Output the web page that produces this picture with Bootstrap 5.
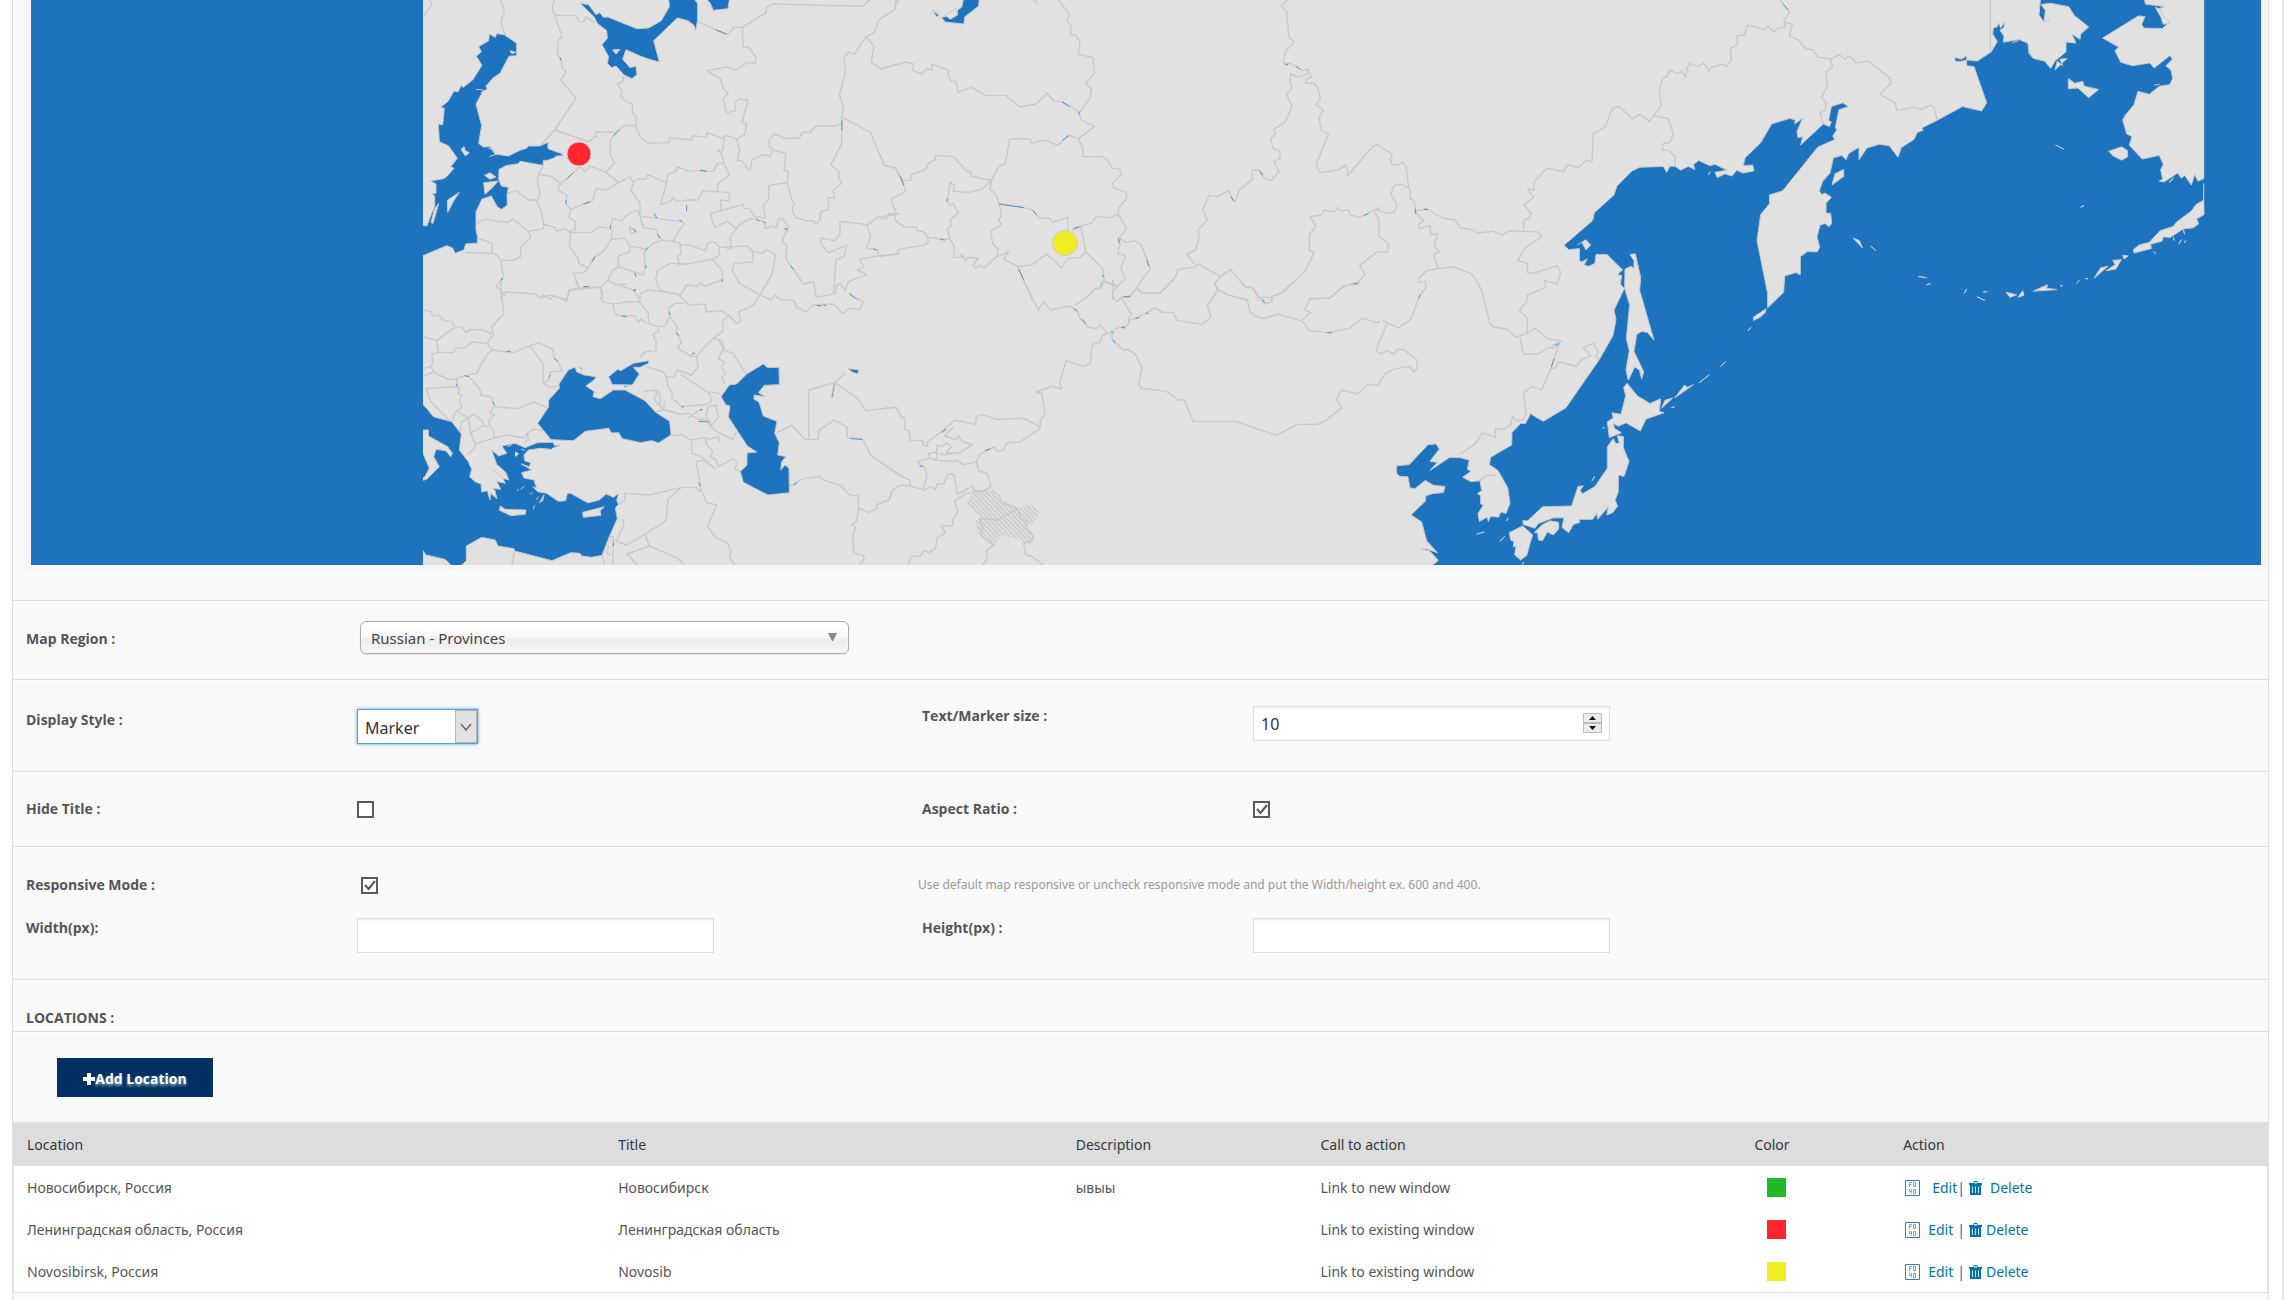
<!DOCTYPE html>
<html lang="en">
<head>
<meta charset="utf-8">
<meta name="viewport" content="width=device-width, initial-scale=1">
<title>Map settings</title>
<link href="https://cdn.jsdelivr.net/npm/bootstrap@5.3.0/dist/css/bootstrap.min.css" rel="stylesheet">
<style>
body{font-family:"Noto Sans","Open Sans",sans-serif;font-size:14px;line-height:20px;color:#555;background:#fff;overflow-x:hidden}
.page-shell{min-height:100vh;padding:0 13px 0 12px;border-right:2px solid #e8e8e8}
.map-panel{min-height:100vh;background:#f9f9f9;border-left:1px solid #dfdfdf;border-right:1px solid #dfdfdf}
.map-frame{background:#f5f5f5;margin:0 2px 30px 13px;padding:0 5px 5px}
.map-frame svg{display:block;width:100%;height:auto}
.form-line{border-top:1px solid #dfdfdf;box-shadow:inset 0 1px #fff;padding-left:13px;display:grid;grid-template-columns:331fr 565fr 331fr 1015fr;align-content:start}
.form-line label,.section-title{font-family:"Open Sans",sans-serif;font-weight:700;font-size:14px;color:#555}
.region-line{padding-top:20px;height:79px}
.style-line{padding-top:26px;height:92px}
.check-line{padding-top:27px;height:75px}
.size-line{padding-top:28px;height:133px;row-gap:23px}
.section-title{border-top:1px solid #dfdfdf;box-shadow:inset 0 1px #fff;padding:28px 13px 3px;height:52px;margin:0;line-height:20px}
.text-box{width:357px;height:35px;border:1px solid #ddd;border-radius:0;background:#fff;box-shadow:inset 0 1px 2px rgba(0,0,0,.07);font-size:16px;color:#333;padding:0 7px;appearance:textfield}
.text-box::-webkit-inner-spin-button{appearance:none}
.pick{position:relative;display:inline-block}
.pick select{appearance:none;width:100%;height:100%}
.pick svg{position:absolute;pointer-events:none}
.pick-region{width:489px;height:33px;margin-left:3px}
.pick-region select{border:1px solid #aaa;border-radius:6px;padding:0 10px;font-size:15px;color:#444;background:linear-gradient(#fff 20%,#f6f6f6 50%,#eee 52%,#f4f4f4 100%);box-shadow:inset 0 0 3px #fff,0 1px 1px rgba(0,0,0,.1)}
.pick-region svg{right:12px;top:12px}
.pick-style{width:121px;height:35px;margin-top:3px}
.pick-style select{border:1px solid #5b9dd9;border-radius:0;padding:2px 7px 0;font-size:16px;color:#333;background:#fff;box-shadow:0 0 3px rgba(30,140,190,.8)}
.pick-style svg{right:1px;top:1px}
.pick-num svg{right:8px;top:7px}
.tick{appearance:none;display:block;width:17px;height:17px;border:2px solid #5a5a5a;background:#fff;margin:2px 0 0}
.tick:checked{background:linear-gradient(#fff,#fff)}
.tick-wrap{position:relative;width:17px}
.tick-wrap svg{position:absolute;left:3px;top:4px;pointer-events:none}
.hint{grid-column:span 2;font-size:12px;color:#999;margin-left:-4px}
.add-btn{background:#003062;color:#fff;border:0;border-radius:0;width:156px;height:39px;font-family:"Open Sans",sans-serif;font-size:14px;font-weight:700;padding:2px 0 0;text-shadow:0 2px 3px rgba(255,255,255,.6)}
.add-btn:hover{background:#003062;color:#fff}
.add-bar{border-top:1px solid #dfdfdf;box-shadow:inset 0 1px #fff;padding:26px 0 25px 44px}
.loc-table{table-layout:fixed;margin:0;border:1px solid #e1e1e1;font-size:14px;background:#fff}
.loc-table th,.loc-table td{background:none;border:0;padding:12px 13px 10px;line-height:20px;font-weight:400;color:#555;box-shadow:none}
.loc-table thead{background:#ddd}
.loc-table th{color:#32373c;padding:12px 13px 11px}
.loc-table a{color:#0073aa;text-decoration:none}
.swatch{display:block;width:19px;height:19px;margin-left:13px}
.acts{color:#0073aa;padding-left:2px}
.acts svg{display:block}
</style>
<script src="https://cdn.jsdelivr.net/npm/bootstrap@5.3.0/dist/js/bootstrap.bundle.min.js"></script>
</head>
<body>
<div class="page-shell">
<main class="map-panel">
<div class="map-frame">
<svg viewBox="31 0 2230 565" role="img" aria-label="Map of Russian provinces">
<defs>
<pattern id="hatch" width="9" height="9" patternUnits="userSpaceOnUse" patternTransform="rotate(-38)"><rect width="4" height="9" fill="#cbcbcb"/></pattern>
<clipPath id="west"><rect x="0" y="-5" width="1225" height="910"/></clipPath>
<style>
.sea{fill:#1e73be;stroke:#c4c8cb;stroke-width:1}
.isle{fill:#e1e1e1;stroke:#c4c8cb;stroke-width:1}
.brd{fill:none;stroke:#c8c9ca;stroke-width:1.4}
.lake{fill:none;stroke:#5a90be;stroke-width:1}
.sea,.isle,.brd,.lake{vector-effect:non-scaling-stroke;stroke-linejoin:round}
</style>
</defs>
<rect x="31" width="2230" height="565" fill="#1e73be"/>
<rect x="423" width="1781" height="565" fill="#e1e1e1"/>
<!-- north-west: Scandinavia, Baltic, European Russia -->
<g transform="translate(400 0) scale(.333333)">
<path class="brd" d="M88-5 95 15 69 50M300-5 313 33 302 70 316 104M466-5 456 22 487 112 476 116 472 162 484 182 486 204 499 216 482 240 528 294 464 390 420 438M464 46H528L537 65 551 66 558 50 585 70M464 390 568 426 582 410 592 412 584 396 648 397 673 376 706 377 710 350 698 340 697 310 680 306 662 288 666 274 652 250 668 246 670 228M648 397 631 420 630 464 644 488 618 517 570 498 553 515 540 500 500 536 482 550 474 570 500 585 498 610 512 628 506 652 526 664 525 692M706 377 722 412 745 429 806 428 809 413 874 420 880 407 918 412 922 398 970 416 974 406 1010 416 1034 404 1040 372 1026 366 1044 302 1018 297 1006 306V332L980 338 970 298 985 278 972 270 962 238 922 212 980 201 1010 210 1042 187 1065 190 1069 172 1044 140 1029 143 1027 82 1098 38 1100 22 1117 12 1388 19 1415-5M893 64 975 102 988 102 1000 82H1027M618 517 657 547 690 530 700 548 692 570 720 610V648L775 656 842 664 854 670 828 704 820 725M657 547 619 570 588 566 578 602 512 628M700 548 714 536 738 538 742 524 800 547 782 614 812 604 818 592 830 604 864 600 894 600 908 572 990 578 986 603 962 600V630M800 547 804 523 830 512V500L862 512 940 514 952 490H972L988 526 955 550 950 578M972 490 963 458 952 452H968L974 406M1010 416 1019 450 1012 482 1026 482 1045 510 1052 508 1056 478 1094 463 1110 468 1120 450 1158 460 1152 510 1164 515 1162 548 1172 590 1182 612 1176 632 1188 652 1216 662 1240 662 1248 674 1260 660 1262 636 1285 628V594L1304 594 1300 572 1325 550 1316 530V514L1293 495 1325 430V352L1330 320 1318 286 1336 218 1332 172 1348 155 1362 163 1398 110 1422 138 1414 188 1445 206 1500 190M1398 110 1422 98 1436 60 1484 30 1488-5M1328 352 1412 398 1452 495 1488 505 1500 535M1120 450 1108 440V416L1125 402 1152 414 1198 415 1206 398 1232 396 1246 378H1310L1325 370M1162 548 1106 556V600L1090 615 1096 654 1064 650 1050 626 1032 625 1030 613 950 636 932 640 938 668 946 682 980 664 1010 685 990 712 995 745 978 742M322 580 350 571 384 600 415 600 420 580 412 548 416 520 430 498M418 523 456 530 482 550M410 600 425 640 431 672 465 682 470 693 482 690 495 685 510 698 575 698 596 680 630 685 638 656 665 662 688 638 712 632 720 648M230 670 254 658 325 667 338 656 385 694 431 686 431 672M385 694 392 714 362 740V770L342 780 302 782 292 766 278 760 195 758M232 714 275 730 278 760M302 782 310 830 288 860 303 870V900M525 692H512L508 740 535 775 536 790 564 804 580 775 612 752 634 718 636 690 630 685M634 718 675 714 690 738 740 748 758 730 788 720 840 728 843 762 832 768 838 790 812 790 774 810 767 840 780 870 840 886 860 855 892 858 900 848 914 858 968 840 966 810 936 778 862 792 830 792M690 738 688 756 655 768V800L730 825 736 800 732 760 740 748M720 650 730 682 768 688 778 712 788 720M843 762 840 736 862 734 916 752 924 728 944 726 958 742 1042 738 1058 754V786L1002 790 996 810 1018 850 1080 884 1116 824 1126 764 1098 748 1090 760 1058 754M958 742 958 766 936 778M982 750 990 740M1010 685 1025 668 1054 655 1094 666 1096 686 1114 678 1130 684 1134 660 1146 655 1166 680 1146 722 1160 736 1158 776 1182 810 1210 852 1242 846 1248 892 1300 882 1308 780 1332 770 1340 736 1285 758 1262 730 1262 714 1304 722 1320 702V664L1388 672 1400 676 1432 652 1480 645 1500 640M1400 676 1412 708 1400 745 1435 750V768L1500 762M1435 768 1378 778 1392 800 1372 810 1400 824 1345 845 1336 872 1320 852 1310 855 1306 882M564 804 550 820 520 818 530 850 540 868 602 862 622 842 638 812 655 800M602 862 608 880 600 900M622 842 704 872 715 895M640 855 680 852M688 680 708 693 694 702ZM303 880 320 876 405 882 420 894 450 885 500 898 508 870 540 868"/>
<path class="sea" d="M60 677H81L95 640 104 618V588L96 582 108 580V552L92 543 130 536 138 532 162 505 152 500 172 475 146 438 118 425 115 372 128 375 133 325 122 322 145 303 162 273 174 276 183 257 190 262 218 240 246 196 229 169 244 155 236 140 266 122 268 102 286 112 290 101 313 104 350 130V167L327 169 300 220 280 233 258 258 262 268 246 275 244 283 228 312 245 377 236 430 250 441 270 440 285 462 325 468 362 450 380 445 385 438H420L444 427V446L482 460 492 467 470 468 460 475 438 482 430 480 429 496 360 484 355 491 318 497 297 508 296 538 304 558 325 562 321 585 322 615 305 628 292 621 274 588 246 597 228 635V690L232 708V730L218 730 197 732 192 750 165 760 158 744 140 737 60 771ZM540 10 566 14 588 44 600 38 610 52 624 51 710 86 746 84 784 62 808 20 806-5H880L893 10V60L887 92 882 76 864 62 832 54 761 122 778 186 748 178 720 168 678 149 668 178 690 203 708 198 711 224 696 236 672 225 648 198 635 203 622 190 626 170 606 134 622 115 620 92 592 70 582 50ZM916-5 930 8 940 31 984 26 989-5Z"/>
<path class="isle" d="M251 548 295 543 275 565 255 583ZM254 526 270 518 288 531 270 538ZM142 601 178 577 162 601 143 637ZM93 668 104 625 116 611 99 670ZM183 448 192 440 196 452 208 458 196 468ZM330 152 348 157 335 161ZM638 150 660 148 648 162ZM228 268 250 270M265 445 285 450M268 470 290 462"/>
<path class="lake" d="M640 408 658 390M502 536 520 518M550 612 570 606M632 676V686M700 686 708 698M762 640 770 654M860 616V634M838 660 846 664M772 704 780 714M736 752 744 742M578 784 584 770M704 820 708 830M702 870H708M738 796V804M948 90 980 102M480 172 484 182M498 600V612M1152 686 1164 688M1070 656 1078 664M1090 664 1096 670M1172 798 1180 808M1326 360V390M1420 746 1430 750M900 510 920 514M550 860H566M964 838 968 846M1348 880 1370 898M300 846 306 838M1494 515 1500 530"/>
</g>
<!-- south-west: Black Sea, Mediterranean, Caspian -->
<g transform="translate(400 280) scale(.333333)">
<path class="brd" d="M303 0V30L312 100 275 140 280 165 260 190 278 210 340 218 415 188 458 208 462 235 472 242 486 273 452 276 446 300 430 308 428 250 392 200M310 48 320 36 405 42 420 54 432 46 450 58 460 48 490 58 500 66 508 30 540 22M69 90 92 94 100 110 115 105 132 122 158 125 163 140 185 142 200 158 208 150 245 148 275 162M163 142 110 182 69 170M110 182 115 218 160 218 164 206 195 203 215 186 260 190M115 218 96 222 98 250 90 260 69 266M90 260 110 282 150 300 170 296 195 287 230 280 245 250 262 222 278 210M69 290 100 276M170 296 172 320 80 325M78 325 92 365 155 428 165 398 185 382 178 364 185 345 172 340 180 330 172 320M195 287 208 290 225 310 240 330 242 345 272 350 280 366 282 380 352 386 400 366 442 382M282 380 270 400 284 404 268 420V438L282 452V474L225 492 212 460 218 456 248 438 248 424 222 402 205 414 172 395M205 414 184 426 180 460M205 414 212 460M248 438H268M225 492 224 505 202 524M282 474 320 465 372 474 382 460 400 448 435 452M382 460 385 478 374 486M430 308 448 322 475 318M530 0 535 25 602 20M602 30 608 65 640 72 690 64 718 66 722 40 745 30 835 42 865 76 916 72 918 96 965 92 986 106 1010 130 1022 124 1016 95 1060 76 1080 44 1105 0M640 72V84L650 106 704 108 714 126 724 118 740 130M718 66 745 98 746 130 775 140 795 138 810 110 806 84 825 70 850 70M775 140V154L758 165 768 180V212L735 215 720 232M810 110 832 140 828 155 845 186 832 204 875 230 890 228 894 262 875 285 832 270 822 292 798 290 790 276 740 260M890 228 915 200 940 175 965 182 975 212 1000 220 1025 262 1040 282M940 175 968 155 970 120 986 106M1080 44 1112 60 1125 45 1138 58 1182 62 1190 82 1218 96 1240 75 1300 72 1328 100 1348 85 1380 88 1390 66 1345 40M955 180 970 205 955 235 975 246 965 262 975 280 965 295 975 312M798 290 805 320 818 340 815 355 830 365 845 380 900 375 925 372 935 365 928 340 875 305 840 282M928 335 962 342M730 335 765 330 770 345 762 358 790 390 795 362M770 330 780 345V380M767 395 795 390 840 402 865 400 890 416 930 422 932 438 955 458 998 478 1010 455M865 414 892 394 905 390M925 380 948 375 955 412 930 440 918 408ZM813 465 852 466 870 480 916 472 925 478 955 470 958 485M875 485V520L905 530 940 562M916 475 920 495 938 512 930 530 948 540 955 560 1000 536 1010 548 1006 568 1025 575M888 545 912 540 945 565M888 545 898 592 900 620 920 668 950 675 922 738 945 770 982 790 992 810 990 835 1005 855M673 640 748 645 845 622 888 622 898 635 905 625M845 622 805 656 798 722 736 762 680 795 650 784M673 640 676 660 655 673M736 762 748 798 828 832 855 856M748 798 682 822 712 856M668 716 672 735 648 784M606 826 614 856M630 770 640 770 638 856M625 795 622 820 632 826M344 813 335 856M1131 458 1175 436 1214 478 1255 478 1256 452 1302 420 1340 440 1342 472 1388 478 1412 526 1500 586M1226 474V330L1305 308 1372 355 1398 392 1488 382 1500 405M1305 308 1335 280M1168 618 1210 596 1260 590 1270 600 1322 616 1350 646 1375 648 1376 684 1408 698 1430 685V675L1468 658 1478 630 1500 616M1376 684 1370 722 1355 735 1366 742 1358 768 1362 820 1390 826 1392 838 1378 856"/>
<path class="sea" d="M60 365 80 385 100 410 155 425 184 462 178 510 205 545 215 568 209 590 225 605 243 612 245 636 262 632 270 660 272 640 291 657 285 632 278 625 302 628 290 604 316 610 308 595 326 600 318 578 290 553 275 510 296 528 320 520 306 498 345 490 375 503 412 488 460 487 462 495 480 497 460 503 455 508 420 505 385 510 372 525 374 542 392 548 388 560 364 552 395 570 365 578 372 594 402 600 410 625 398 620 413 635 440 640 475 664 497 662 502 640H512L564 669 598 660 618 642 640 652 657 640 650 660 655 673 646 685 652 716 628 770 606 826 575 832 545 828 540 820 512 818 456 842 344 813 342 806 294 798 286 780 245 772 199 798V842L178 862H160L135 838 78 825 60 800V603L80 598 118 560 101 530 108 508 138 513 152 530 157 520 143 500 85 468V450H60ZM60 500 88 565 75 590 60 598ZM413 430 445 382 446 360 478 325 477 312 505 270 525 262 530 275 552 285 586 290 585 298 558 318 583 335 579 350 601 356 640 330H675L735 362 767 397 809 424 813 465 776 489 755 482 722 488 667 476 656 458 635 459 626 445 556 454 520 482 453 479ZM626 290 653 268 662 272 700 250 746 242V250L720 262 700 262 718 282 697 315 637 314ZM963 350 988 315 1010 312 1040 282 1090 252 1103 263 1137 262 1138 314 1093 316 1075 338 1097 350 1062 345V358L1077 366 1090 408 1131 424 1124 460 1138 488 1133 525 1158 530 1145 545 1142 570 1155 555 1167 565 1168 638 1104 645 1030 607 1021 575 1041 555V519L1070 516 1042 498 985 411 990 378 978 375ZM1345 266 1377 270 1372 282 1355 275ZM1303 308 1305 312 1298 352 1294 350Z"/>
<path class="isle" d="M297 690 302 678 315 688 378 690 376 703 332 707ZM548 697 613 680 600 692 603 706 550 712ZM418 668 432 645 428 662ZM400 688 404 676M345 515 356 522 345 530M362 628 374 618M350 632 356 628M390 642 398 638M275 568 310 592M322 500 335 495M364 508 374 510M408 660 415 650"/>
<path class="lake" d="M552 20H566M700 32 708 28M446 292 452 285M464 235 472 244M278 366 284 374M895 424 926 426M900 388 908 390M845 384 852 378M672 320 680 318M320 214H332M1250 76 1264 78M1270 74 1278 78M1350 42 1364 54M1180 616 1192 608M895 608 902 618M1352 476 1388 478M640 788V798M806 96 812 104M828 160 838 166M875 224 885 218M168 312 174 320M195 287 206 290M540 262 548 270M304 0 308-6M664 108 680 110"/>
</g>
<!-- Siberia, upper -->
<g transform="translate(880 0) scale(.408163 .333333)" clip-path="url(#west)">
<path class="brd" d="M0 57 35 30 40 10 48-5M372-5 386 10M435-5 464 43 458 60 468 78V103L480 106 490 126 486 162 522 173 526 220 503 250 518 266 514 295 487 340 493 360 525 380 486 416 497 445V470H545L557 480 570 505 586 506 592 522 570 548 573 564 604 578V595L584 625V642L565 653 530 650 518 670 492 678 471 690M0 207 64 186 82 192 80 210 102 223 115 206 127 210V193L170 211 166 225 174 244H186L191 276 224 262 258 286H308L342 321 383 312 409 280 427 304 448 305 487 335M486 416 462 405 436 436 403 420 372 430 367 417 318 416 307 490 290 500 273 541 248 569 216 577 180 574 182 556 172 547 165 605 172 615 180 612 192 640 172 658 175 678 165 686 170 714M57 541H75L77 524 112 508 118 490 135 480V466L180 470 212 513 222 515V528L273 541M0 462 10 496 38 503 57 545 62 575 30 595V614L40 636 35 640 38 662 58 680 90 682 92 692 108 696 118 712V728L106 736 46 748 42 762 0 769M36 640 20 642 17 656 0 655M118 712 158 720 170 714 182 740 180 772H206L198 762 210 783 214 772 240 774 228 795 234 804 245 796 255 804 286 770 290 748 276 730 271 694 298 672 290 660 298 645 292 612 283 580 270 570 273 541M292 612 350 622 374 630 390 655 414 654 424 667 460 652V690M584 642 604 687 586 712 588 735 582 760 601 766 590 808 601 834 583 858 552 847M492 680 505 757 545 803 550 845 541 862 525 868 500 900M505 757 490 772 462 775 444 803 408 762 373 794 340 800 303 778 315 756 286 770M338 800 374 900M586 712 602 728 624 722 640 735 662 805 625 870 612 892 590 892M583 858 570 875V900M625 862 640 878 686 880 724 830 730 808 770 802 780 792 834 830 858 808 897 862H912L928 892 960 892M775 800 752 762 772 752 782 715 779 690 802 660 791 628 806 586 826 590 854 573 870 607 880 570 912 538V510H928L942 535 957 542 978 515 965 484 980 475V453L963 445 957 418 970 400 964 388 992 367 1010 320 996 284 1010 262 1004 250 1006 222 1026 231 1046 223 1049 207 1036 212 1006 190H988L993 155 1015 125 1002 112 996 33 982 18 1005-5M1049 207 1057 232 1045 235 1043 249 1064 250 1073 264 1079 298 1068 314 1086 330 1076 352 1080 390 1099 402 1068 495 1078 518 1126 509 1139 494 1146 510 1145 528 1208 438 1220 434 1256 464M1256 616 1240 640 1216 628 1228 620 1175 652 1152 645 1148 630 1126 632 1122 622 1114 636 1088 630 1082 645 1054 650 1068 680 1052 702V752L1064 758 1040 816 984 880 960 890V900M1212 636 1222 658 1223 710 1246 732 1242 752 1216 757 1175 797 1188 823 1170 850 1136 858 1102 894 1052 897M834 830 820 850 828 868 812 900M828 868 850 884 900 900"/>
<path class="sea" d="M205-5H243L242 18 208 50 205 72 160 66 150 52 190 45 190 30 200 22ZM130 34 145 46 138 50Z"/>
<path class="isle" d="M160 45 186 25 190 45 172 58ZM125 27 145 40"/>
<path class="lake" d="M446 306 464 320M292 612 352 623M50 530 58 556M474 686 488 680M340 808 352 840M374 632 384 645M486 336 489 344M148 716 158 720M1186 646 1196 642M1154 852H1170M654 780 658 798M164 596V604M546 824V832M542 850V860M595 891 612 888M930 512 938 526M860 590 865 602M1020 200 1028 207M992 194H1000M584 714 586 730M448 420 462 408"/>
</g>
<!-- Central Asia, Mongolia, China -->
<g transform="translate(880 280) scale(.408163 .333333)" clip-path="url(#west)">
<path fill="url(#hatch)" d="M212 672 225 640 275 632 298 660 340 686 364 672 392 690 385 715 362 740 375 775 368 795 330 775 300 765 280 795 240 760 234 720 246 715Z"/>
<path class="brd" d="M350 0 388 90 401 65 418 90 466 78 482 90 490 115 510 142 530 146 540 134 556 160 568 158 580 145 608 136 610 122 646 104 674 83 692 97H718L728 122 790 133 811 110 802 75 828 30M478 75 505 54 524 28 543 25 545 2 583 18M570 0V52L582 65 590 52 612 50 630 20M590 52 615 100 608 122M630 20 640 38 686 40 718 0M828 30 820 15 826 0M828 30 850 44 900 60 906 95 918 108 940 116 975 102 1035 124 1052 152 1098 158 1150 145 1182 114 1216 128 1234 121M1035 120 1055 98 1040 90 1054 55H1102L1135 20 1175 8M880 0 897 22H912L928 52 943 72 960 66V50L984 38 1018 0M1241 130 1216 210 1225 222 1244 212M1256 279 1240 280 1220 315H1192L1170 342 1130 330 1118 360 1132 382 1092 422 1072 433H1024L970 466 872 424H767L746 360H730L702 334 640 325 634 312 642 262 626 224 608 208 595 210 568 174 568 158M556 160 546 165 540 186 520 194 515 250 498 259 456 242 440 308 445 328 424 318 382 336 397 342 404 404 393 420 392 446 342 486 312 488 300 512 285 513 280 500 246 522 236 545 242 573 263 580 272 620 255 632 230 632 228 617 190 643M392 440 352 415 285 418 250 403 236 410 234 433 183 420 155 450 116 486 117 500 106 495 104 482H74L71 452 61 450 60 412 54 413 39 381 0 387M180 440 158 468 188 480 192 466 202 486 226 493 194 520 162 518 175 500 165 488 150 500 140 495 138 540 122 535 118 520 140 516M145 520 158 525 178 520M138 540 182 545 188 540 205 554 240 545M122 535 93 543 98 560 110 562 115 590 104 632 125 620 136 628 140 612H156L165 585 175 580 182 587 190 643M0 545 46 585 73 600V618L52 615 30 630 22 660 0 670M73 618 104 628M265 632 210 640 182 665 192 695 178 718V736L150 738 160 760 140 772 136 805 120 818 108 812 98 828 75 830 70 856M275 632 292 645 298 668 338 686 288 720 243 715 252 740 247 766 278 796 260 812 264 836 250 856M338 686 345 715 358 725V745L375 765V780L352 790 357 825 370 828 402 856"/>
<path class="lake" d="M474 86 484 94M496 118 504 130M566 152 572 160M592 142 602 144M626 116 636 112M652 100H658M1095 158H1108M1162 10H1170M150 458 162 448M570 180 576 190M598 50H612M937 58 942 68M258 512 270 506M98 558H106"/>
</g>
<!-- Far East, Okhotsk, Japan -->
<g transform="translate(1380 0) scale(.333333 .3699)">
<path class="brd" d="M0 396 38 418 30 428 36 445H56L66 438 78 448 86 508 62 498 42 502 32 525 50 552 45 572 22 577 0 570M86 508 92 514 90 538 102 542 108 575 132 598 116 605 118 618 150 610 152 634 172 632 163 665 178 682 162 686 164 700 175 726M108 570 140 565 188 590 224 594 242 616 282 622 290 631 337 625 365 635 388 624 430 626 432 595 448 590 454 578 432 554 460 534 443 510 462 514V492L500 455 550 464 563 445 596 453 620 434 636 437 640 362 675 343 698 292 718 288 756 321 780 309 808 328 822 312 844 286 838 245 846 213 862 206 870 190 892 199 905 193 916 207 926 172 954 180 971 170 988 192 994 182 1030 174 1040 180 1054 162 1051 130 1072 122V97L1094 94 1102 68 1156 80 1164 70 1182 87 1195 75H1216L1212 55 1229 32 1200 0M1216 60 1237 66 1228 97 1258 110 1277 133 1298 134 1314 154 1350 160 1378 148 1396 160 1404 152 1418 158 1425 170 1466 166 1531 212 1532 226 1500 255 1546 278 1550 298 1605 290 1625 296 1650 285 1662 290 1672 325M1350 160 1358 180 1338 194 1342 234 1324 263 1340 280 1334 300 1320 306 1330 335M822 312 865 321 880 363 870 385 850 388 845 404 868 408 886 424V450M430 626H470L485 640 434 672 412 705 442 712V736L456 740 531 718 542 736 532 768 494 758 498 776 442 798 440 815 418 840 442 860V900M175 726 140 732 116 752V762H136L138 778 118 800 94 862 54 887 8 866M175 726 218 721 276 741 303 780 330 874 340 884 384 890 407 912 442 900 465 887 502 916 544 922 524 940 504 940 474 957H430L420 912M538 930 512 998 525 995 535 978 590 990 604 972 632 962 610 940 640 928 655 950 648 965 658 970M512 998 485 1054 455 1045 430 1062 438 1120 430 1135 412 1138 398 1126 392 1148 372 1160H346V1182L306 1170 288 1198 240 1228M0 640 26 660 22 680 0 682M20 876 0 922M0 957 24 948 40 958 54 944 72 946 112 974V994L102 1005 88 990 42 998 16 1010 0 1032M300 1300 316 1287 348 1284M1831 0V140"/>
<path class="sea" d="M148 1535 175 1515 150 1490 125 1484H140L172 1494 140 1462 125 1411 93 1392 136 1355 138 1340 160 1334 190 1332 195 1315 160 1312 136 1299 105 1321 90 1319 84 1289 60 1288 50 1280V1259L88 1256 144 1202 168 1200 178 1214 150 1247 172 1250 150 1272 208 1237H240L268 1244 262 1268 272 1275 248 1290 272 1302 300 1300 305 1327 292 1334 302 1340V1362L310 1366 294 1388 298 1410 322 1398 325 1410 332 1396 356 1398 362 1384 378 1388 390 1360 383 1318 354 1272 328 1256 332 1236 395 1203 396 1169 422 1145H436L452 1118 468 1128 490 1139 558 1102 658 972 699 907 708 864 702 838 733 780 721 768 725 745 711 742 728 730 681 688H648L645 712 626 720 612 716 622 700 606 708 598 705V672L566 675 552 663 638 596 643 575 702 527 711 503 756 462 780 452 850 450 860 466 870 449 886 450 902 460 925 450 945 458 940 445 956 434 990 448 1005 444 1040 460 1005 466 1012 480 1035 470 1056 476 1070 460 1088 468 1122 462 1118 446 1090 448 1095 427 1142 386 1175 335 1230 320 1246 325 1244 335 1268 320 1251 355 1254 372 1268 370 1262 392 1330 335 1348 342 1354 330 1346 325 1354 288 1388 278 1405 288 1377 297 1366 344 1370 352 1358 368 1365 377 1313 398 1208 516 1168 527 1169 550 1142 580 1131 650 1163 794V832L1211 790 1214 746 1248 737 1261 743V694L1282 680 1312 681 1319 668 1311 640 1320 609 1335 604 1347 613 1355 604 1352 577 1338 576V550L1354 533 1335 522 1325 526 1318 516 1328 490 1350 468 1360 427 1386 420 1398 432 1406 415 1437 398V432L1461 400 1498 390 1528 394 1554 425 1564 399 1602 377 1612 358 1630 352 1625 346 1672 325 1747 288 1805 300 1820 278 1782 180 1760 178V162L1792 165 1834 140 1852 112 1838 92 1840 76 1852 72 1856 62 1862 76 1873 60 1872 74 1860 82 1872 98 1870 114 1918 107 1944 117 1947 144 1960 158 1994 165 2012 185 2025 165 2058 140V114L2088 116 2075 92 2100 106 2102 92 2126 73 2083 42 2066 18 2012 9 1983 12 1996 28 1992 60 1977 40 1982-9H2292L2296 11 2355 18 2330 25 2365 62 2348 77 2292 76 2285 66 2295 45 2275 43 2168 103 2216 127 2205 137 2222 168 2258 178 2310 170 2322 184 2370 150 2377 160 2358 178 2373 190 2378 212 2369 229 2338 233 2308 255 2274 247 2262 283 2237 310 2228 324 2240 362 2256 369 2248 393 2287 430 2338 420 2350 445 2342 458 2348 484 2338 490 2352 492 2393 468 2404 482 2414 474 2434 500 2444 472 2454 490 2473 482H2500V1535Z"/>
<path class="isle" d="M735 728 752 720 762 725V705L750 688 766 686 782 750 779 785 822 920 803 899 785 896 770 904 762 950 791 1005 785 1024 778 1000 764 992 745 1028 738 1000 748 948 739 915 749 824 734 780ZM741 1036 772 1070 810 1091 842 1078 838 1112 852 1116 798 1133 781 1165 738 1143 715 1152 700 1145 703 1158 724 1170 688 1183 682 1140 700 1130 696 1116 723 1120 737 1070 731 1048ZM700 1186 708 1200 718 1196 712 1178 730 1180V1210L747 1248 732 1288 715 1284V1330L705 1352 713 1368 698 1386 680 1392 685 1370 653 1404 650 1388 638 1404H596L600 1412 580 1418 566 1440 546 1426 552 1400H520L475 1415 465 1428 430 1418 428 1408H443L488 1370 575 1368 594 1315 610 1314 600 1325 608 1335 645 1315 682 1266V1208ZM462 1440 488 1418 510 1408 536 1412V1430L520 1446 502 1438 488 1461 475 1460 473 1440ZM388 1440 428 1422 458 1446 450 1470 440 1502 422 1514 404 1500 408 1476 400 1478 402 1464 392 1460ZM845 1104 855 1082 878 1076ZM884 1076 914 1041 922 1047 940 1040ZM957 1035 988 1013ZM1020 992 1037 978ZM1104 894 1112 885ZM1121 857 1158 835 1156 845 1140 858 1121 866ZM1356 500 1365 470 1391 458V477ZM606 655 617 648 632 662 618 676ZM592 662 606 655M1420 644 1438 650 1448 671ZM1472 665 1488 678ZM290 1444 313 1438ZM360 1464 374 1450ZM636 1300 644 1288ZM668 1158 674 1155ZM380 1408 384 1400ZM874 1102 884 1100ZM984 472 992 465ZM427 1527 431 1520Z"/>
<path class="sea" d="M516 934 538 926 536 932Z"/>
<path class="lake" d="M1210 12 1224 26M116 806 122 796M106 565V578M132 566H144M514 992 522 970"/>
</g>
<!-- Bering Sea, Aleutian chain, Alaska -->
<g transform="translate(1840 0) scale(.333333 .3699)">
<path class="sea" d="M345 155 365 160 380 150V162L362 166 345 166Z"/>
<path class="isle" d="M685 212 704 225 728 220 733 233 776 242 746 264 714 238 685 240ZM806 409 845 397 862 407 863 424 845 433 820 422ZM1092 496V542L1093 580 1070 592 1076 605 1060 616 1030 619 990 642 970 640 966 652 932 660 934 672 882 684 880 675 898 662 928 655 960 624 1000 612 1010 600 1055 570 1068 553 1090 542ZM762 752 782 724 804 720ZM798 732 826 715 818 704 844 702 828 727ZM848 690 865 692 852 700ZM580 787 622 770 620 779 650 783ZM498 790 530 797 510 804ZM534 804 548 786 552 798ZM647 392 671 403ZM722 560 732 556ZM234 747 260 751ZM260 770 272 767ZM373 793 380 781ZM411 802 434 812ZM430 790 442 788ZM660 772 668 773ZM710 766 718 758ZM736 753 744 754ZM940 680 948 686ZM1016 660 1024 648ZM1030 620 1034 634ZM1034 656 1037 650ZM1000 642 1002 650ZM988 494 1000 480ZM946 20 962 25 968 42 990 62 970 66 962 45ZM942 230 958 228M610 55 630 56M645 190 652 165 668 178 660 160 682 158M516 116 535 110"/>
</g>
<path d="M2204 0V178" stroke="#c4c8cb"/>
<rect x="31" width="392" height="565" fill="#1e73be"/>
<rect x="2204.500" width="56.500" height="565" fill="#1e73be"/>
<circle cx="579" cy="154" r="12" fill="#ff262d" stroke="#d6c9c9" stroke-width="1"/>
<circle cx="1065" cy="243" r="12.500" fill="#f0ee22" stroke="#c9cacb" stroke-width="1"/>
</svg>
</div>
<form>
<div class="form-line region-line">
<label for="region" class="pt-2">Map Region :</label>
<div class="pick pick-region"><select id="region"><option>Russian - Provinces</option></select><svg width="9" height="8"><path d="M0 0H9L5 8H4Z" fill="#888"/></svg></div>
</div>
<div class="form-line style-line">
<label for="style" class="pt-1">Display Style :</label>
<div class="pick pick-style"><select id="style"><option>Marker</option></select><svg width="22" height="33"><path d="M.5.5H21.500V32.500H.5Z" fill="#e1e1e1" stroke="#b5b5b5"/><path d="M6 14 11 20 16 14" fill="none" stroke="#666" stroke-width="1.500"/></svg></div>
<label for="msize">Text/Marker size :</label>
<div><span class="pick pick-num"><input id="msize" type="number" class="text-box" value="10"><svg width="19" height="20"><path d="M.5.5H18.500V9.500H.5ZM.5 10.500H18.500V19.500H.5Z" fill="#ececec" stroke="#bbb"/><path d="M6 7 9.500 3 13 7ZM6 13 9.500 17 13 13Z" fill="#111"/></svg></span></div>
</div>
<div class="form-line check-line">
<label for="hide">Hide Title :</label>
<div class="tick-wrap"><input id="hide" type="checkbox" class="tick"></div>
<label for="aspect">Aspect Ratio :</label>
<div class="tick-wrap"><input id="aspect" type="checkbox" class="tick" checked><svg width="12" height="12"><path d="M1 6 4.500 10 11 2" fill="none" stroke="#555" stroke-width="2"/></svg></div>
</div>
<div class="form-line size-line">
<label for="resp">Responsive Mode :</label>
<div class="tick-wrap ms-1"><input id="resp" type="checkbox" class="tick" checked><svg width="12" height="12"><path d="M1 6 4.500 10 11 2" fill="none" stroke="#555" stroke-width="2"/></svg></div>
<div class="hint">Use default map responsive or uncheck responsive mode and put the Width/height ex. 600 and 400.</div>
<label for="wpx">Width(px):</label>
<div><input id="wpx" type="text" class="text-box"></div>
<label for="hpx">Height(px) :</label>
<div><input id="hpx" type="text" class="text-box"></div>
</div>
<h2 class="section-title">LOCATIONS :</h2>
<div class="add-bar"><button type="button" class="btn add-btn d-flex align-items-center justify-content-center"><svg width="12" height="12" viewBox="0 0 12 12"><path d="M4 0H8V4H12V8H8V12H4V8H0V4H4Z" fill="#fff"/></svg>Add Location</button></div>
</form>
<table class="table loc-table">
<colgroup><col style="width:26.25%"><col style="width:20.3%"><col style="width:10.86%"><col style="width:19.25%"><col style="width:6.6%"><col></colgroup>
<thead><tr><th>Location</th><th>Title</th><th>Description</th><th>Call to action</th><th>Color</th><th>Action</th></tr></thead>
<tbody>
<tr><td>Новосибирск, Россия</td><td>Новосибирск</td><td>ывыы</td><td>Link to new window</td><td><span class="swatch" style="background:#1fba27"></span></td>
<td><div class="acts d-flex align-items-center"><svg class="me-2" width="15" height="16"><use href="#edit-box"/></svg><a href="#" class="ms-1">Edit</a><span>|</span><svg class="ms-1 me-2" width="13" height="14"><use href="#bin"/></svg><a href="#">Delete</a></div></td></tr>
<tr><td>Ленинградская область, Россия</td><td>Ленинградская область</td><td></td><td>Link to existing window</td><td><span class="swatch" style="background:#ff262d"></span></td>
<td><div class="acts d-flex align-items-center"><svg class="me-2" width="15" height="16"><use href="#edit-box"/></svg><a href="#">Edit</a><span class="ms-1">|</span><svg class="ms-1 me-1" width="13" height="14"><use href="#bin"/></svg><a href="#">Delete</a></div></td></tr>
<tr><td>Novosibirsk, Россия</td><td>Novosib</td><td></td><td>Link to existing window</td><td><span class="swatch" style="background:#f0ee22"></span></td>
<td><div class="acts d-flex align-items-center"><svg class="me-2" width="15" height="16"><use href="#edit-box"/></svg><a href="#">Edit</a><span class="ms-1">|</span><svg class="ms-1 me-1" width="13" height="14"><use href="#bin"/></svg><a href="#">Delete</a></div></td></tr>
</tbody>
</table>
</main>
</div>
<svg width="0" height="0" class="position-absolute">
<symbol id="edit-box" viewBox="0 0 15 16"><path d="M.5.5H14.500V15.500H.5Z" fill="#fff" stroke="#2a86b5"/><path d="M4.500 7V2.500H7M4.500 4.500H6.500M8.500 2.500H10.500V6.500H8.500ZM4.500 9V11.500H6.500M6.500 9V13.500M8.500 9.500H10.500V13.500H8.500Z" fill="none" stroke="#6fb0d0"/></symbol>
<symbol id="bin" viewBox="0 0 13 14"><path d="M0 2H4L5 0H8L9 2H13V4H12V14H1V4H0Z" fill="#0073aa"/><path d="M5 2H8V1.500H5ZM3.500 5.500V12M6.500 5.500V12M9.500 5.500V12" stroke="#cfe6f2" fill="none"/></symbol>
</svg>
</body>
</html>
